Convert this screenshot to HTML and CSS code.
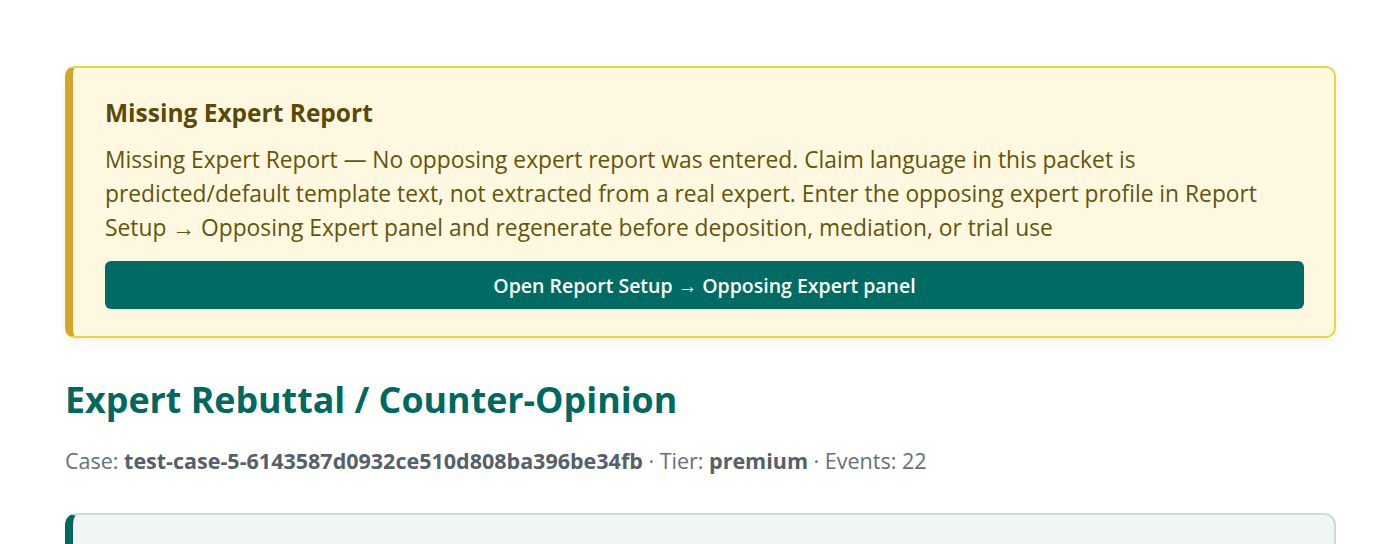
FILE: index.html
```html
<!DOCTYPE html>
<html lang="en">
<head>
    <meta charset="UTF-8">
    <meta name="viewport" content="width=device-width, initial-scale=1.0">
    <title>Expert Rebuttal</title>
    <link rel="stylesheet" href="styles.css">
</head>
<body>

    <div class="page">
        <div class="alert">
            <h3 class="alert-title">Missing Expert Report</h3>
            <p class="alert-text">Missing Expert Report — No opposing expert report was entered. Claim language in this packet is predicted/default template text, not extracted from a real expert. Enter the opposing expert profile in Report Setup → Opposing Expert panel and regenerate before deposition, mediation, or trial use</p>
            <button class="alert-btn" type="button">Open Report Setup → Opposing Expert panel</button>
        </div>

        <h1>Expert Rebuttal / Counter-Opinion</h1>
        <p class="meta">Case: <strong>test-case-5-6143587d0932ce510d808ba396be34fb</strong> · Tier: <strong>premium</strong> · Events: 22</p>

        <div class="card"></div>
    </div>

</body>
</html>
```

FILE: styles.css
```css
body {
    font-family: 'Segoe UI', 'Open Sans', sans-serif;
    background-color: #fff;
    margin: 0;
    padding: 0;
}
.page {
    padding: 66px 64px 0 65px;
}
.alert {
    background-color: #fff8e1;
    border: 2px solid #e9d446;
    border-left: 8px solid #d1a62b;
    border-radius: 10px;
    padding: 29px 30px 27px 32px;
    box-shadow: 0 4px 10px rgba(200, 170, 40, 0.15);
}
.alert-title {
    margin: 0 0 15px;
    font-size: 24.5px;
    line-height: 31px;
    font-weight: 700;
    color: #5b4a05;
}
.alert-text {
    margin: 0 0 16px;
    font-size: 22.8px;
    line-height: 34px;
    color: #63550b;
}
.alert-btn {
    display: block;
    width: 100%;
    height: 48px;
    border: none;
    border-radius: 6px;
    background-color: #006b62;
    color: #fff;
    font-family: inherit;
    font-size: 19.5px;
    font-weight: 600;
}
h1 {
    margin: 37px 0 23px;
    font-size: 35.8px;
    line-height: 48px;
    color: #00685e;
}
.meta {
    margin: 0;
    font-size: 21.5px;
    line-height: 30px;
    color: #66707a;
}
.meta strong {
    color: #55606a;
}
.card {
    margin-top: 37px;
    height: 80px;
    background-color: #f0f6f5;
    border: 2px solid #c9ddd9;
    border-left: 8px solid #00695c;
    border-radius: 12px;
}
```
